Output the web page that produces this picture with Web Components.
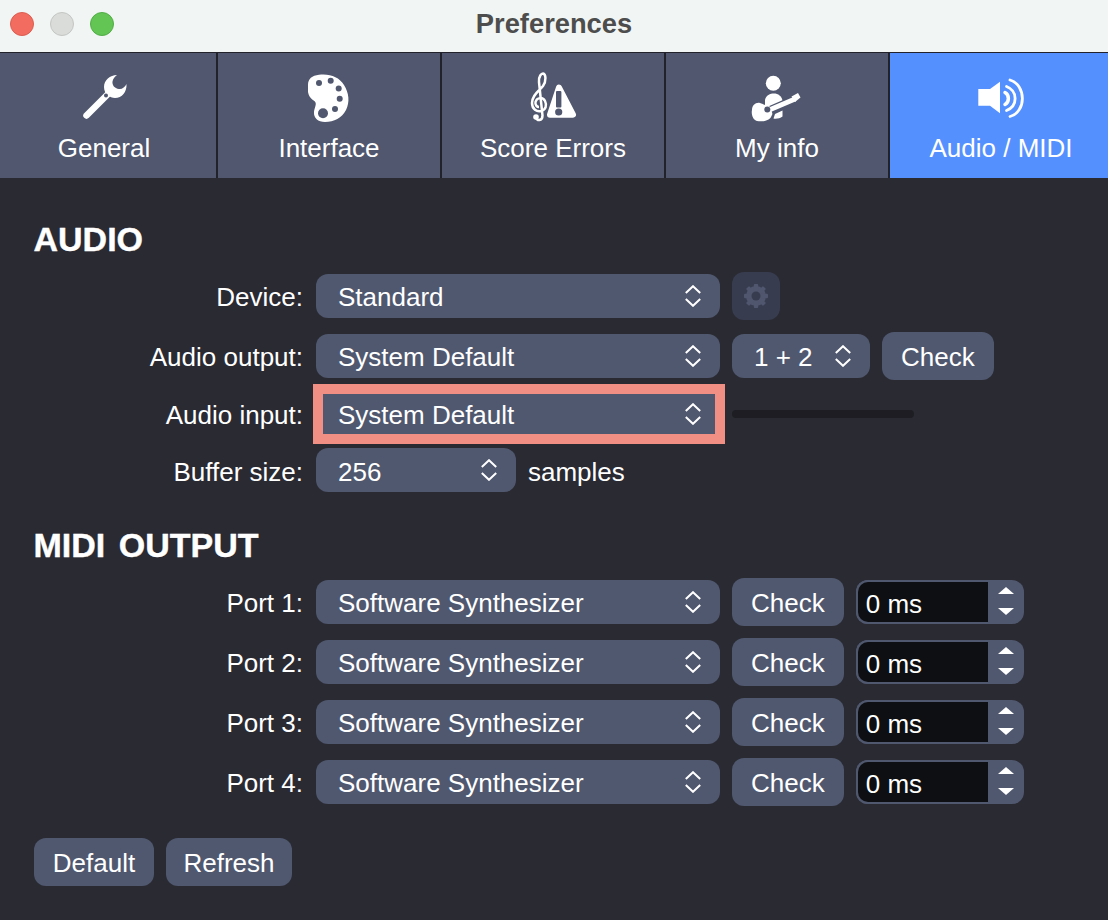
<!DOCTYPE html>
<html lang="en">
<head>
<meta charset="utf-8">
<title>Preferences</title>
<style>
    html, body { margin: 0; padding: 0; background: #2a2a33; }
    body { font: 26px "Liberation Sans", Arial, sans-serif; color: #fff; }
</style>
</head>
<body>
<pref-window>
    <title-bar slot="title">Preferences</title-bar>

    <tab-bar slot="tabs">
        <tab-item first>
            <svg slot="icon" width="60" height="60" viewBox="74 66 60 60">
                <path fill="#fff" d="M117 75C110 75 104 80 104 87C104 94 110 98 115 98C122 98 127 92 126.5 84C125 87 122 89.500 119 89C114.500 88.500 112 85 112.500 81.500C113 78.500 115 76.500 117 75Z"/>
                <path stroke="#fff" stroke-width="6.500" stroke-linecap="round" d="M108 94L86.500 115.500"/>
                <circle cx="106" cy="95.500" r="2" fill="#50576e"/>
            </svg>
            General
        </tab-item>
        <tab-item>
            <svg slot="icon" width="60" height="60" viewBox="299 66 60 60">
                <path fill="#fff" d="M308 85C308 79 312 75.500 319 74.800C330 73.500 339 77 344 85C349 93 350 102 346 110C342 118 334 122 325 122C318 122 313.500 118 314 112C314.300 108 316.500 105 315.500 102.500C314.500 100 309 99 308 92Z"/>
                <g fill="#50576e">
                    <circle cx="319" cy="83" r="3"/>
                    <circle cx="330.700" cy="80.700" r="3"/>
                    <circle cx="338.700" cy="88.500" r="3"/>
                    <circle cx="339.700" cy="98.700" r="3"/>
                    <circle cx="335" cy="109" r="3"/>
                    <circle cx="323" cy="113.300" r="5"/>
                </g>
            </svg>
            Interface
        </tab-item>
        <tab-item>
            <svg slot="icon" width="60" height="60" viewBox="523 66 60 60">
                <path fill="none" stroke="#fff" stroke-width="2.500" d="M536 117C536.500 121.500 542.500 121 542.500 115.500L539 82C538.500 76 541.500 73.500 543 73.500C546 74 546.500 81 543 86C539 91 532 95 532 103C532 109.500 537 112 541 111C546 110 547 105 545 101C543 97 537 97 535.500 102C535 105 537 107 539 107"/>
                <circle cx="536" cy="117" r="2.800" fill="#fff"/>
                <path fill="#fff" stroke="#fff" stroke-width="6" stroke-linejoin="round" d="M559 87.500L573 114.700H550Z"/>
                <rect x="556" y="91" width="5.400" height="16.500" rx="1" fill="#50576e"/>
                <circle cx="558.700" cy="112" r="3.600" fill="#50576e"/>
            </svg>
            Score Errors
        </tab-item>
        <tab-item>
            <svg slot="icon" width="60" height="60" viewBox="747 66 60 60">
                <circle cx="773.300" cy="83.300" r="7.500" fill="#fff"/>
                <path fill="#fff" d="M765 100C766 95 770 93.500 774 93.500C778 93.500 782 96 782.500 101V106H765Z"/>
                <path fill="#fff" d="M775 114L782.500 110.500V116.500C780 118.500 776 119 773.500 118.500Z"/>
                <path fill="#fff" d="M752 110C752 105 756 102 760 103C763 104 764 105 767 105C771 105 773.500 107 773.500 110C773 113 772 115 771 117C769 121 762 122 757 121C753 120 751 114 752 110Z"/>
                <path stroke="#50576e" stroke-width="8.500" d="M771 110L795 99.500"/>
                <path stroke="#fff" stroke-width="5" d="M768 110.500L795 99"/>
                <path fill="#fff" d="M791.500 96.500L798 93L800.500 97.500L795 102Z"/>
                <circle cx="767.300" cy="109.500" r="3" fill="#50576e"/>
            </svg>
            My info
        </tab-item>
        <tab-item active>
            <svg slot="icon" width="60" height="60" viewBox="971 66 60 60">
                <path fill="#fff" d="M978.300 89H990L1000 81.700V113.300L990 105.700H978.300Z"/>
                <g fill="none" stroke="#fff" stroke-linecap="round">
                    <path stroke-width="3.500" d="M1005 92.500C1009.500 95 1009.500 102 1005 104.500"/>
                    <path stroke-width="2.800" d="M1006.500 86.500C1018 91 1018 106 1006.500 110.500"/>
                    <path stroke-width="2.800" d="M1010 80C1026.500 85 1026.500 112 1010 116.500"/>
                </g>
            </svg>
            Audio / MIDI
        </tab-item>
    </tab-bar>

    <pref-heading style="margin-top:42px">AUDIO</pref-heading>
    <pref-row label="Device:" style="margin-top:14px">
        <pref-select style="width:404px">Standard</pref-select>
        <pref-button icon disabled>
            <svg width="26" height="26" viewBox="0 0 26 26" fill="#50566e">
                <circle cx="13" cy="13" r="10"/>
                <g>
                    <rect x="10.800" y="1" width="4.400" height="24" rx="1"/>
                    <rect x="10.800" y="1" width="4.400" height="24" rx="1" transform="rotate(45 13 13)"/>
                    <rect x="10.800" y="1" width="4.400" height="24" rx="1" transform="rotate(90 13 13)"/>
                    <rect x="10.800" y="1" width="4.400" height="24" rx="1" transform="rotate(135 13 13)"/>
                </g>
                <circle cx="13" cy="13" r="4.500" fill="#373c4f"/>
            </svg>
        </pref-button>
    </pref-row>
    <pref-row label="Audio output:" style="margin-top:16px">
        <pref-select style="width:404px">System Default</pref-select>
        <pref-select style="width:138px" compact>1 + 2</pref-select>
        <pref-button>Check</pref-button>
    </pref-row>
    <pref-row label="Audio input:" style="margin-top:14px">
        <pref-select style="width:404px" highlight>System Default</pref-select>
        <level-meter></level-meter>
    </pref-row>
    <pref-row label="Buffer size:" style="margin-top:12px;--text-pad:4px">
        <pref-select style="width:200px">256</pref-select>
        <pref-text>samples</pref-text>
    </pref-row>

    <pref-heading style="margin-top:34px">MIDI OUTPUT</pref-heading>
    <pref-row label="Port 1:" style="margin-top:14px">
        <pref-select style="width:404px">Software Synthesizer</pref-select>
        <pref-button>Check</pref-button>
        <pref-stepper>0 ms</pref-stepper>
    </pref-row>
    <pref-row label="Port 2:" style="margin-top:16px">
        <pref-select style="width:404px">Software Synthesizer</pref-select>
        <pref-button>Check</pref-button>
        <pref-stepper>0 ms</pref-stepper>
    </pref-row>
    <pref-row label="Port 3:" style="margin-top:16px">
        <pref-select style="width:404px">Software Synthesizer</pref-select>
        <pref-button>Check</pref-button>
        <pref-stepper>0 ms</pref-stepper>
    </pref-row>
    <pref-row label="Port 4:" style="margin-top:16px">
        <pref-select style="width:404px">Software Synthesizer</pref-select>
        <pref-button>Check</pref-button>
        <pref-stepper>0 ms</pref-stepper>
    </pref-row>

    <pref-footer>
        <pref-button style="width:120px">Default</pref-button>
        <pref-button style="width:126px">Refresh</pref-button>
    </pref-footer>
</pref-window>

<script>
'use strict'

const Widgets = (function () {
    function define(name, css, html, onConnect) {
        const template = document.createElement('template')
        template.innerHTML = `<style>${css}</style>${html}`

        customElements.define(name, class extends HTMLElement {
            constructor() {
                super()
                this.attachShadow({ mode: 'open' })
                this.shadowRoot.appendChild(template.content.cloneNode(true))
            }

            connectedCallback() {
                if (onConnect) onConnect.call(this)
            }
        })
    }

    define('pref-window', `
        :host { display: block; width: 1108px; height: 920px; overflow: hidden; background: #2a2a33; }
    `, `<slot name="title"></slot><slot name="tabs"></slot><slot></slot>`)

    define('title-bar', `
        :host { display: flex; height: 52px; box-sizing: border-box; padding-bottom: 4px; align-items: center; justify-content: center;
                position: relative; background: #f1f5f3; color: #4d4d4d; font-weight: bold; font-size: 27.300px; }
        .lights { position: absolute; left: 10px; top: 12px; display: flex; gap: 16px; }
        .lights i { display: block; box-sizing: border-box; width: 24px; height: 24px; border-radius: 50%; border: 1px solid; }
        .close { background: #f26d5f; border-color: #dd5c50 !important; }
        .min { background: #dadcda; border-color: #c4c6c4 !important; }
        .max { background: #62c554; border-color: #53ad47 !important; }
    `, `<div class="lights"><i class="close"></i><i class="min"></i><i class="max"></i></div><slot></slot>`)

    define('tab-bar', `
        :host { display: flex; gap: 2px; height: 126px; box-sizing: border-box; margin: 0 -8px; padding-top: 1px;
                background: #22222b; width: 1120px; }
    `, `<slot></slot>`)

    define('tab-item', `
        :host { display: flex; flex: 0 0 222px; flex-direction: column; align-items: center; box-sizing: border-box;
                padding-top: 13px; background: #50576e; color: #fff; white-space: nowrap; }
        :host([first]) { flex-basis: 224px; }
        :host([active]) { background: #5590ff; }
        .icon { display: block; height: 60px; }
        .label { display: block; margin-top: 7px; line-height: 30px; }
    `, `<span class="icon"><slot name="icon"></slot></span><span class="label"><slot></slot></span>`)

    define('pref-heading', `
        :host { display: block; margin-left: 33.500px; font-weight: bold; font-size: 34px; line-height: 38px; padding-bottom: 2px; color: #fff;
                word-spacing: 4px; -webkit-text-stroke: .4px #fff; }
    `, `<slot></slot>`)

    define('pref-row', `
        :host { display: flex; align-items: center; height: 44px; color: #fff; }
        .label { flex: 0 0 303px; box-sizing: border-box; text-align: right; margin-right: 13px; padding-top: var(--text-pad, 2px); }
        .controls { display: flex; align-items: center; gap: 12px; }
    `, `<span class="label"></span><div class="controls"><slot></slot></div>`, function () {
        this.shadowRoot.querySelector('.label').textContent = this.getAttribute('label')
    })

    define('pref-text', `
        :host { display: block; padding-top: var(--text-pad, 2px); }
    `, `<slot></slot>`)

    define('pref-select', `
        :host { display: flex; position: relative; align-items: center; box-sizing: border-box; height: 44px;
                padding: var(--text-pad, 2px) 0 0 22px; border-radius: 12px; background: #50586f; color: #fff; white-space: nowrap; }
        svg { position: absolute; right: 19px; top: 11px; }
        :host([highlight])::after { content: ""; position: absolute; left: -3px; right: -5px; top: -8px; bottom: -8px;
                border: 10px solid #f28f84; }
    `, `<slot></slot>
        <svg width="16" height="22" viewBox="0 0 16 22" fill="none" stroke="#fff" stroke-width="2">
            <path d="M.8 8L8 1.200L15.200 8"/><path d="M.8 14L8 20.800L15.200 14"/>
        </svg>`)

    define('pref-button', `
        :host { display: flex; align-items: center; justify-content: center; box-sizing: border-box; height: 48px;
                margin: -2px 0; padding: 2px 19px 0; border-radius: 12px; background: #50586f; color: #fff; white-space: nowrap; }
        :host([icon]) { width: 48px; padding: 0; }
        :host([disabled]) { background: #373c4f; }
    `, `<slot></slot>`)

    define('pref-stepper', `
        :host { display: flex; box-sizing: border-box; width: 168px; height: 44px; border-radius: 12px; background: #50586f; }
        .field { flex: 1; display: flex; align-items: center; box-sizing: border-box; padding: 4px 0 0 8px;
                 border: 2px solid #50586f; border-right: 0; border-radius: 12px 0 0 12px; background: #0e0f12; color: #fff; }
        .arrows { display: flex; flex-direction: column; justify-content: space-between; align-items: center;
                  flex: 0 0 36px; box-sizing: border-box; padding: 7px 0 9px; }
        svg { display: block; }
    `, `<div class="field"><slot></slot></div>
        <div class="arrows">
            <svg width="16" height="7" viewBox="0 0 16 7" fill="#fff"><path d="M8 0L16 7H0Z"/></svg>
            <svg width="16" height="7" viewBox="0 0 16 7" fill="#fff"><path d="M0 0H16L8 7Z"/></svg>
        </div>`)

    define('level-meter', `
        :host { display: block; width: 182px; height: 8px; border-radius: 4px; background: #1d1d23; }
    `, ``)

    define('pref-footer', `
        :host { display: flex; gap: 12px; margin: 36px 0 0 34px; }
    `, `<slot></slot>`)
}())
</script>
</body>
</html>
